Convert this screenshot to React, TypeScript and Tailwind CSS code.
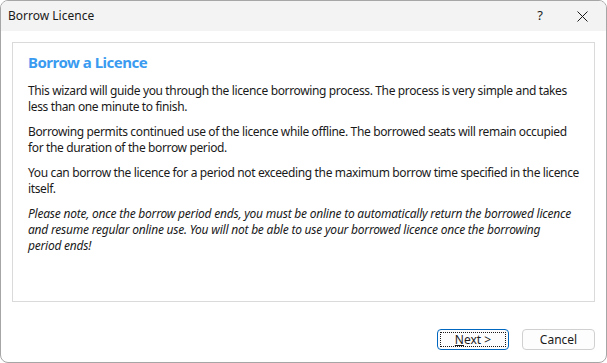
import React from 'react';

const font = { fontFamily: '"Segoe UI", "Noto Sans", sans-serif' };

const App: React.FC = () => {
  return (
    <div className="w-[607px] h-[363px] bg-white">
      <div
        className="w-[607px] h-[363px] flex flex-col border border-[#a6a6a6] rounded-[8px] overflow-hidden bg-white text-[#1a1a1a]"
        style={font}
      >
        {/* Title bar */}
        <div className="h-[30px] shrink-0 bg-[#f3f3f3] flex items-center pl-[7px] text-[12px]">
          <span>Borrow Licence</span>
          <span className="ml-auto mr-[34px] text-[13px]">?</span>
          <svg width="11" height="11" viewBox="0 0 11 11" className="mr-[18px]">
            <path d="M0.5 0.5 L10.5 10.5 M10.5 0.5 L0.5 10.5" stroke="#1a1a1a" strokeWidth="1" />
          </svg>
        </div>

        {/* Body */}
        <div className="flex-1 flex flex-col px-[11px] pt-[11px]">
          <div className="h-[260px] border border-[#dadada] px-[15px] pt-[9px] text-[12px] leading-[16px] tracking-[-0.36px]">
            <h1 className="text-[15px] font-bold text-[#3a9bf0] leading-[20px] mb-[11px] tracking-[-0.5px]">Borrow a Licence</h1>
            <p className="mb-[9px]">
              This wizard will guide you through the licence borrowing process. The process is very simple and takes less than one minute to finish.
            </p>
            <p className="mb-[9px]">
              Borrowing permits continued use of the licence while offline. The borrowed seats will remain occupied for the duration of the borrow period.
            </p>
            <p className="mb-[9px]">
              You can borrow the licence for a period not exceeding the maximum borrow time specified in the licence itself.
            </p>
            <p className="italic tracking-[-0.22px]">
              Please note, once the borrow period ends, you must be online to automatically return the borrowed licence and resume regular online use. You will not be able to use your borrowed licence once the borrowing
              <br />
              period ends!
            </p>
          </div>

          <div className="flex justify-end gap-[13px] mt-[27px]">
            <button className="w-[72px] h-[21px] rounded-[4px] border border-[#0067c0] bg-[#fdfdfd] p-[2px] text-[12px]">
              <span className="flex items-center justify-center w-full h-full border border-dotted border-[#1a1a1a]">
                <span className="underline">N</span>ext &gt;
              </span>
            </button>
            <button className="w-[73px] h-[21px] rounded-[4px] border border-[#d0d0d0] bg-[#fdfdfd] text-[12px]">
              Cancel
            </button>
          </div>
        </div>
      </div>
    </div>
  );
};

export default App;
